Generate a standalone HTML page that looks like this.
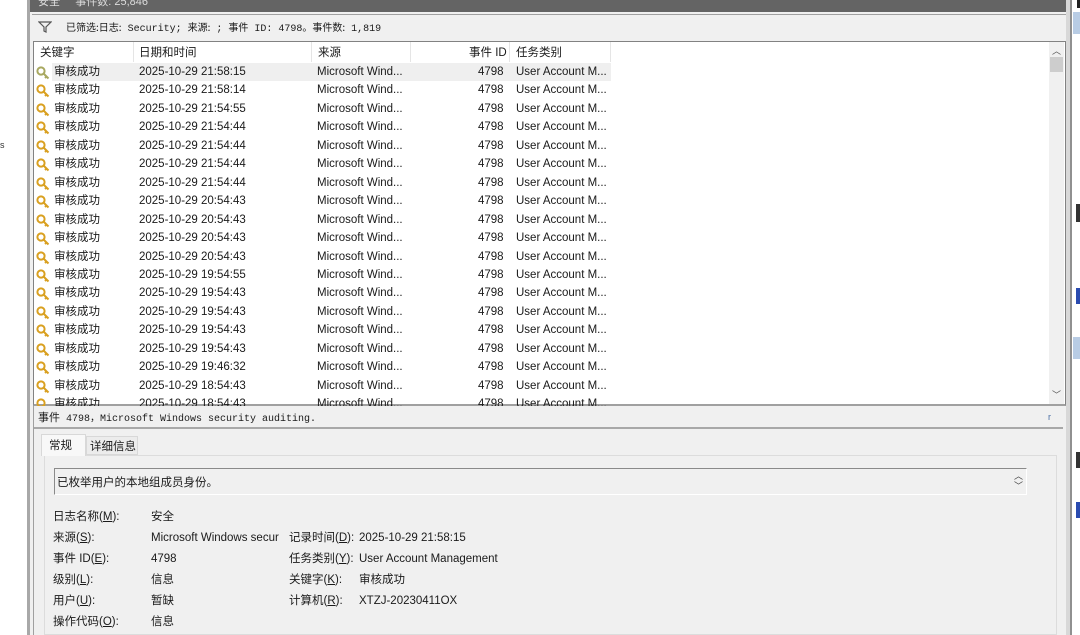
<!DOCTYPE html>
<html><head><meta charset="utf-8"><style>
*{margin:0;padding:0;box-sizing:border-box}
body{width:1080px;height:635px;overflow:hidden;background:#fff;position:relative;font-family:"Liberation Sans","Noto Sans CJK SC",sans-serif;font-size:11.5px;color:#1a1a1a}
.a{position:absolute;white-space:nowrap}
.mono{font-family:"Liberation Mono","Noto Sans CJK SC",monospace;font-size:10px}
.row{position:absolute;left:36px;height:18px;line-height:18px;width:575px}
.row span{position:absolute;white-space:nowrap}
.key{left:0;top:3px;width:14px;height:14px}
</style></head><body>
<div class="a" style="left:27px;top:0;width:3px;height:635px;background:#a8a8a8"></div>
<div class="a" style="left:30px;top:0;width:1042px;height:635px;background:#f0f0f0"></div>
<div class="a" style="left:30px;top:0;width:1037px;height:12px;background:#646464;color:#ddd;font-size:11px;line-height:8px;overflow:hidden"><span style="position:absolute;left:8px;top:-3px;line-height:11px">安全 &nbsp; &nbsp; 事件数: 25,846</span></div>
<div class="a" style="left:1066px;top:0;width:4px;height:635px;background:#d8d8d8"></div>
<div class="a" style="left:1070px;top:0;width:2px;height:635px;background:#909090"></div>
<div class="a" style="left:1072px;top:0;width:8px;height:635px;background:#fff"></div>
<div class="a" style="left:1073px;top:12px;width:7px;height:22px;background:#b8cce4"></div>
<div class="a" style="left:1073px;top:337px;width:7px;height:22px;background:#b8cce4"></div>
<div class="a" style="left:1076px;top:204px;width:4px;height:18px;background:#333"></div>
<div class="a" style="left:1076px;top:288px;width:4px;height:16px;background:#2a4bb0"></div>
<div class="a" style="left:1076px;top:452px;width:4px;height:16px;background:#333"></div>
<div class="a" style="left:1076px;top:502px;width:4px;height:16px;background:#2a4bb0"></div>
<div class="a" style="left:1077px;top:0;width:3px;height:8px;background:#222"></div>
<div class="a" style="left:32px;top:14px;width:1034px;height:27px;border-top:1px solid #a0a0a0;background:#f0f0f0"></div>
<svg class="a" style="left:38px;top:21px" width="14" height="12"><path d="M1 1H13L8 6V11L6 10V6Z" fill="none" stroke="#555" stroke-width="1.2"/></svg>
<div class="a mono" style="left:66px;top:21px;line-height:12px;font-size:10px"><span style="font-family:'Noto Sans CJK SC'">已筛选:日志:</span> Security; <span style="font-family:'Noto Sans CJK SC'">来源:</span> ; <span style="font-family:'Noto Sans CJK SC'">事件</span> ID: 4798<span style="font-family:'Noto Sans CJK SC'">。事件数:</span> 1,819</div>
<div class="a" style="left:33px;top:41px;width:1033px;height:365px;border:1px solid #828282;border-bottom:2px solid #a0a0a0;background:#fff"></div>
<div class="a" style="left:1049px;top:42px;width:15px;height:362px;background:#f0f0f0"></div>
<div class="a" style="left:1050px;top:57px;width:13px;height:15px;background:#cdcdcd"></div>
<div class="a" style="left:1052px;top:44px;font-size:9px;color:#555">︿</div>
<div class="a" style="left:1052px;top:388px;font-size:9px;color:#555">﹀</div>
<div class="a" style="left:34px;top:42px;width:577px;height:20px;background:#fff"></div>
<div class="a" style="left:133px;top:42px;width:1px;height:20px;background:#e5e5e5"></div>
<div class="a" style="left:311px;top:42px;width:1px;height:20px;background:#e5e5e5"></div>
<div class="a" style="left:410px;top:42px;width:1px;height:20px;background:#e5e5e5"></div>
<div class="a" style="left:509px;top:42px;width:1px;height:20px;background:#e5e5e5"></div>
<div class="a" style="left:610px;top:42px;width:1px;height:20px;background:#e5e5e5"></div>
<div class="a" style="left:40px;top:44px">关键字</div>
<div class="a" style="left:139px;top:44px">日期和时间</div>
<div class="a" style="left:318px;top:44px">来源</div>
<div class="a" style="left:469px;top:44px">事件 ID</div>
<div class="a" style="left:516px;top:44px">任务类别</div>
<div class="a" style="left:52px;top:63px;width:559px;height:18px;background:#efefef"></div>
<div id="rows"></div>
<script>
var d=["21:58:15","21:58:14","21:54:55","21:54:44","21:54:44","21:54:44","21:54:44","20:54:43","20:54:43","20:54:43","20:54:43","19:54:55","19:54:43","19:54:43","19:54:43","19:54:43","19:46:32","18:54:43","18:54:43"];
var h="";
for(var i=0;i<20;i++){var t=63+i*18.45;var dt=i<19?d[i]:"18:54:43";
h+='<div class="row" style="top:'+t+'px;'+(i==19?'height:9px;overflow:hidden':'')+'"><svg class="key" viewBox="0 0 14 14" style="position:absolute"><circle cx="5" cy="5" r="3.6" fill="none" stroke="'+(i==0?'#a8a860':'#d9a020')+'" stroke-width="2"/><path d="M7.5 7.5L12.5 12.5M10.5 10.5L9 12" stroke="'+(i==0?'#a8a860':'#d9a020')+'" stroke-width="2"/></svg><span style="left:18px">审核成功</span><span style="left:103px">2025-10-29 '+dt+'</span><span style="left:281px">Microsoft Wind...</span><span style="left:442px">4798</span><span style="left:480px">User Account M...</span></div>';}
document.getElementById("rows").innerHTML=h;
</script>
<div class="a" style="left:33px;top:406px;width:1033px;height:229px;background:#f0f0f0;border-left:1px solid #a0a0a0"></div>
<div class="a mono" style="left:38px;top:411px;line-height:12px"><span style="font-family:'Noto Sans CJK SC';font-size:11px">事件</span> 4798<span style="font-family:'Noto Sans CJK SC'">，</span>Microsoft Windows security auditing.</div>
<div class="a" style="left:1048px;top:412px;font-size:9px;color:#4a6fa5">r</div>
<div class="a" style="left:34px;top:427px;width:1029px;height:2px;background:#a8a8a8"></div>
<div class="a" style="left:44px;top:455px;width:1013px;height:180px;background:#f0f0f0;border:1px solid #dcdcdc"></div>
<div class="a" style="left:41px;top:434px;width:45px;height:22px;background:#f8f8f8;border:1px solid #d8d8d8;border-bottom:none;padding:2px 0 0 7px">常规</div>
<div class="a" style="left:86px;top:436px;width:52px;height:19px;background:#ececec;border:1px solid #d8d8d8;padding:1px 0 0 3px">详细信息</div>
<div class="a" style="left:54px;top:468px;width:973px;height:27px;background:#f0f0f0;border-top:1px solid #8a8a8a;border-left:1px solid #8a8a8a;border-right:1px solid #fff;border-bottom:1px solid #fff"></div>
<div class="a" style="left:57px;top:474px">已枚举用户的本地组成员身份。</div>
<div class="a" style="left:1014px;top:471px;font-size:9px;color:#444;line-height:10px">︿<br>﹀</div>
<div class="a" style="left:53px;top:507px;line-height:21px">日志名称(<u>M</u>):<br>来源(<u>S</u>):<br>事件 ID(<u>E</u>):<br>级别(<u>L</u>):<br>用户(<u>U</u>):<br>操作代码(<u>O</u>):</div>
<div class="a" style="left:151px;top:507px;line-height:21px">安全<br>Microsoft Windows secur<br>4798<br>信息<br>暂缺<br>信息</div>
<div class="a" style="left:289px;top:528px;line-height:21px">记录时间(<u>D</u>):<br>任务类别(<u>Y</u>):<br>关键字(<u>K</u>):<br>计算机(<u>R</u>):</div>
<div class="a" style="left:359px;top:528px;line-height:21px">2025-10-29 21:58:15<br>User Account Management<br>审核成功<br>XTZJ-20230411OX</div>
<div class="a" style="left:0;top:140px;font-size:9px;color:#333">s</div>
</body></html>
